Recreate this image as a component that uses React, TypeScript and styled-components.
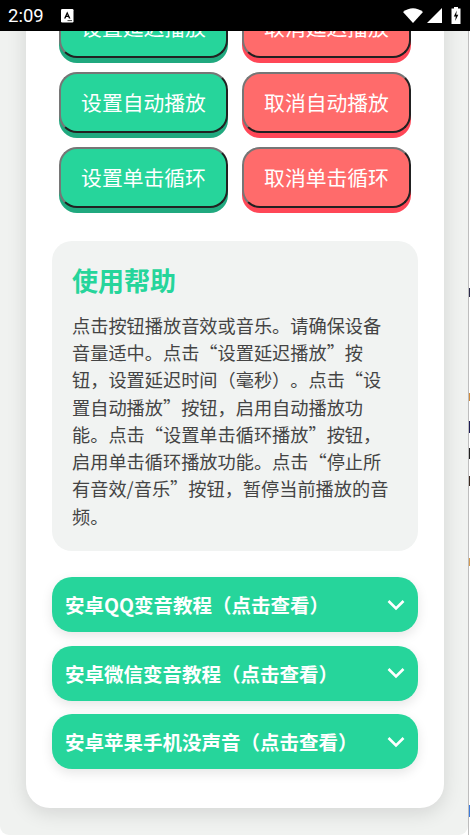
import React from "react";
import styled, { createGlobalStyle } from "styled-components";

const Global = createGlobalStyle`
  html, body { margin: 0; padding: 0; background: #fff; }
  body {
    font-family: "Noto Sans CJK SC", "Noto Sans", sans-serif;
    text-spacing-trim: space-all;
  }
`;

const Device = styled.div`
  width: 470px;
  height: 835px;
  overflow: hidden;
  display: flex;
  flex-direction: column;
`;

const StatusBar = styled.div`
  flex: 0 0 31px;
  background: #000;
  color: #fff;
  display: flex;
  align-items: center;
  padding: 0 9px 0 8px;
`;

const Clock = styled.span`
  font-family: Roboto, sans-serif;
  font-size: 18.5px;
  width: 53px;
  padding-top: 1px;
`;

const StatusRight = styled.div`
  margin-left: auto;
  display: flex;
  align-items: center;
`;

const StatusIcon = styled.svg<{ $gap?: number }>`
  display: block;
  margin-left: ${(p) => p.$gap ?? 0}px;
`;

const Body = styled.div`
  flex: 1;
  min-height: 0;
  display: flex;
  background: #fff;
`;

const Screen = styled.div`
  flex: 0 0 468px;
  overflow: hidden;
  background: #f0f2f0;
  border-radius: 0 0 9px 9px;
  display: flex;
  flex-direction: column;
  justify-content: flex-end;
  align-items: center;
  padding: 0 0 27px 2px;
  box-sizing: border-box;
`;

const DesktopSliver = styled.div`
  flex: 0 0 2px;
  border-left: 1px solid #bdbdbd;
  box-sizing: border-box;
  background:
    linear-gradient(#2b2b4a, #2b2b4a) 0 257px / 1px 9px no-repeat,
    linear-gradient(#d08a3a, #d08a3a) 0 362px / 1px 8px no-repeat,
    linear-gradient(#1d1d55, #1d1d55) 0 390px / 1px 12px no-repeat,
    linear-gradient(#222, #222) 0 417px / 1px 11px no-repeat,
    linear-gradient(#3b2a20, #3b2a20) 0 445px / 1px 10px no-repeat,
    linear-gradient(#d49a50, #d49a50) 0 527px / 1px 8px no-repeat,
    linear-gradient(#3b7bdc, #3b7bdc) 0 774px / 1px 12px no-repeat,
    #fff;
`;

const Card = styled.main`
  flex: none;
  width: 418px;
  box-sizing: border-box;
  background: #fff;
  border-radius: 24px;
  padding: 24px 26px 39px;
  box-shadow: 0 5px 20px rgba(0, 0, 0, 0.12);
`;

const ButtonGrid = styled.div`
  display: grid;
  grid-template-columns: 1fr 1fr;
  gap: 14px;
  padding: 0 7px;
  margin-bottom: 33px;
`;

const PlayButton = styled.button<{ $danger?: boolean }>`
  height: 61px;
  box-sizing: border-box;
  border-width: 2px;
  border-style: solid;
  border-color: #767676 #212121 #212121 #767676;
  border-radius: 18px;
  color: #fff;
  font-family: inherit;
  font-size: 20.8px;
  padding: 0 0 2px;
  background: ${(p) => (p.$danger ? "#ff6b6b" : "#26d59b")};
  box-shadow: 0 5px 0 ${(p) => (p.$danger ? "#ff4757" : "#20a97f")};
`;

const HelpBox = styled.section`
  background: #f1f3f2;
  border-radius: 20px;
  padding: 20px 20px 21px;
  margin-bottom: 26px;
`;

const HelpTitle = styled.h2`
  margin: 0 0 12.6px;
  color: #26d59b;
  font-size: 26px;
  line-height: 38px;
  font-weight: 700;
`;

const HelpText = styled.p`
  margin: 0;
  color: #444;
  font-size: 18.2px;
  line-height: 27.3px;
`;

const Accordion = styled.div`
  height: 55px;
  box-sizing: border-box;
  margin-bottom: 13.5px;
  padding: 0 13px 0 13px;
  border-radius: 20px;
  background: #26d59b;
  color: #fff;
  display: flex;
  align-items: center;
  justify-content: space-between;
  font-size: 19.5px;
  font-weight: 700;
  box-shadow: 0 4px 12px rgba(0, 0, 0, 0.1);
  &:last-child { margin-bottom: 0; }
`;

const Chevron = () => (
  <svg width="18" height="12" viewBox="0 0 18 12" fill="none">
    <path d="M1.5 2 L9 9.5 L16.5 2" stroke="#fff" strokeWidth="2.6" />
  </svg>
);

const AppBadge = () => (
  <svg width="13" height="14" viewBox="0 0 13 14">
    <rect width="12.5" height="13.5" rx="1.2" fill="#fff" />
    <path d="M6.2 2.6 L3 9.6 H4.6 L5.2 8.1 H7.3 L7.9 9.6 H9.5 Z M5.7 6.8 L6.25 5.2 L6.8 6.8 Z" fill="#000" fillRule="evenodd" />
    <rect x="6.5" y="11" width="4.5" height="1.1" fill="#555" />
  </svg>
);

const rows = [
  ["设置延迟播放", "取消延迟播放"],
  ["设置自动播放", "取消自动播放"],
  ["设置单击循环", "取消单击循环"],
];

const guides = ["安卓QQ变音教程（点击查看）", "安卓微信变音教程（点击查看）", "安卓苹果手机没声音（点击查看）"];

export default function App() {
  return (
    <Device>
      <Global />
      <StatusBar>
        <Clock>2:09</Clock>
        <AppBadge />
        <StatusRight>
          <StatusIcon width="20" height="15" viewBox="0 0 20 15">
            <path d="M0 4 Q10 -3.5 20 4 L10 15 Z" fill="#fff" />
          </StatusIcon>
          <StatusIcon $gap={4} width="15" height="15" viewBox="0 0 15 15">
            <path d="M15 0 V15 H0 Z" fill="#fff" />
          </StatusIcon>
          <StatusIcon $gap={9} width="10" height="17" viewBox="0 0 10 17">
            <path d="M3 0 H7 V1.5 H9.5 V17 H0.5 V1.5 H3 Z" fill="#fff" />
            <path d="M5.8 3.5 L2.8 9.5 H4.8 L4.2 14 L7.3 7.7 H5.2 Z" fill="#000" />
          </StatusIcon>
        </StatusRight>
      </StatusBar>
      <Body>
        <Screen>
          <Card>
            <ButtonGrid>
              {rows.map(([set, cancel]) => (
                <React.Fragment key={set}>
                  <PlayButton>{set}</PlayButton>
                  <PlayButton $danger>{cancel}</PlayButton>
                </React.Fragment>
              ))}
            </ButtonGrid>
            <HelpBox>
              <HelpTitle>使用帮助</HelpTitle>
              <HelpText>
                点击按钮播放音效或音乐。请确保设备音量适中。点击“设置延迟播放”按钮，设置延迟时间（毫秒）。点击“设置自动播放”按钮，启用自动播放功能。点击“设置单击循环播放”按钮，启用单击循环播放功能。点击“停止所有音效/音乐”按钮，暂停当前播放的音频。
              </HelpText>
            </HelpBox>
            {guides.map((g) => (
              <Accordion key={g}>
                <span>{g}</span>
                <Chevron />
              </Accordion>
            ))}
          </Card>
        </Screen>
        <DesktopSliver />
      </Body>
    </Device>
  );
}
